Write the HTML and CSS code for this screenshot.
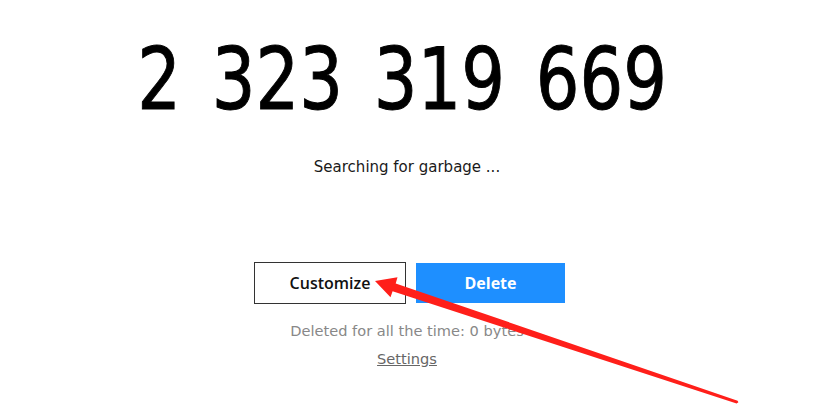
FILE: index.html
```html
<!DOCTYPE html>
<html>
<head>
<meta charset="utf-8">
<link rel="stylesheet" href="styles.css">
</head>
<body>
<main class="page">
  <div class="counter"><span class="counter-text">2 323 319 669</span></div>
  <p class="status">Searching for garbage ...</p>
  <div class="actions">
    <button class="btn btn-outline">Customize</button>
    <button class="btn btn-primary">Delete</button>
  </div>
  <p class="total">Deleted for all the time: 0 bytes</p>
  <a class="settings" href="#">Settings</a>
  <svg class="arrow" width="814" height="413" viewBox="0 0 814 413">
    <polygon points="375,281 397.5,277.3 395.7,283.4 737.6,400.7 738.4,402.2 736.6,403.4 392.6,291.3 390.5,297.2" fill="#ff1f1a"/>
  </svg>
</main>
</body>
</html>
```
FILE: styles.css
```css
html, body {
  margin: 0;
  padding: 0;
  background: #ffffff;
}
.page {
  position: relative;
  width: 814px;
  height: 413px;
  display: flex;
  flex-direction: column;
  align-items: center;
  font-family: "DejaVu Sans", Verdana, sans-serif;
  overflow: hidden;
}
.counter {
  margin-top: 37px;
  height: 85px;
  display: flex;
  justify-content: center;
  width: 100%;
}
.counter-text {
  display: inline-block;
  font-size: 86px;
  line-height: 85px;
  color: #000;
  white-space: nowrap;
  word-spacing: 11px;
  transform: scaleX(0.8);
  transform-origin: center;
  margin-left: -10px;
  -webkit-text-stroke: 1px #000;
}
.status {
  margin: 36px 0 0 0;
  font-size: 15px;
  line-height: 18px;
  color: #1a1a1a;
}
.actions {
  margin-top: 86px;
  display: flex;
  align-items: center;
  gap: 10px;
  padding-left: 5px;
}
.btn {
  font-family: "Open Sans", "DejaVu Sans", sans-serif;
  font-size: 16px;
  cursor: pointer;
  padding: 0;
}
.btn-outline {
  width: 152px;
  height: 42px;
  background: #fff;
  border: 1px solid #333;
  color: #111;
  font-weight: 600;
}
.btn-primary {
  width: 149px;
  height: 40px;
  background: #1e8fff;
  border: none;
  color: #fff;
  font-weight: 700;
}
.total {
  margin: 18px 0 0 0;
  font-size: 14.6px;
  line-height: 18px;
  color: #888;
}
.settings {
  margin-top: 10px;
  font-size: 14.6px;
  line-height: 18px;
  color: #666;
  text-decoration: underline;
}
.arrow {
  position: absolute;
  left: 0;
  top: 0;
  pointer-events: none;
}
```
